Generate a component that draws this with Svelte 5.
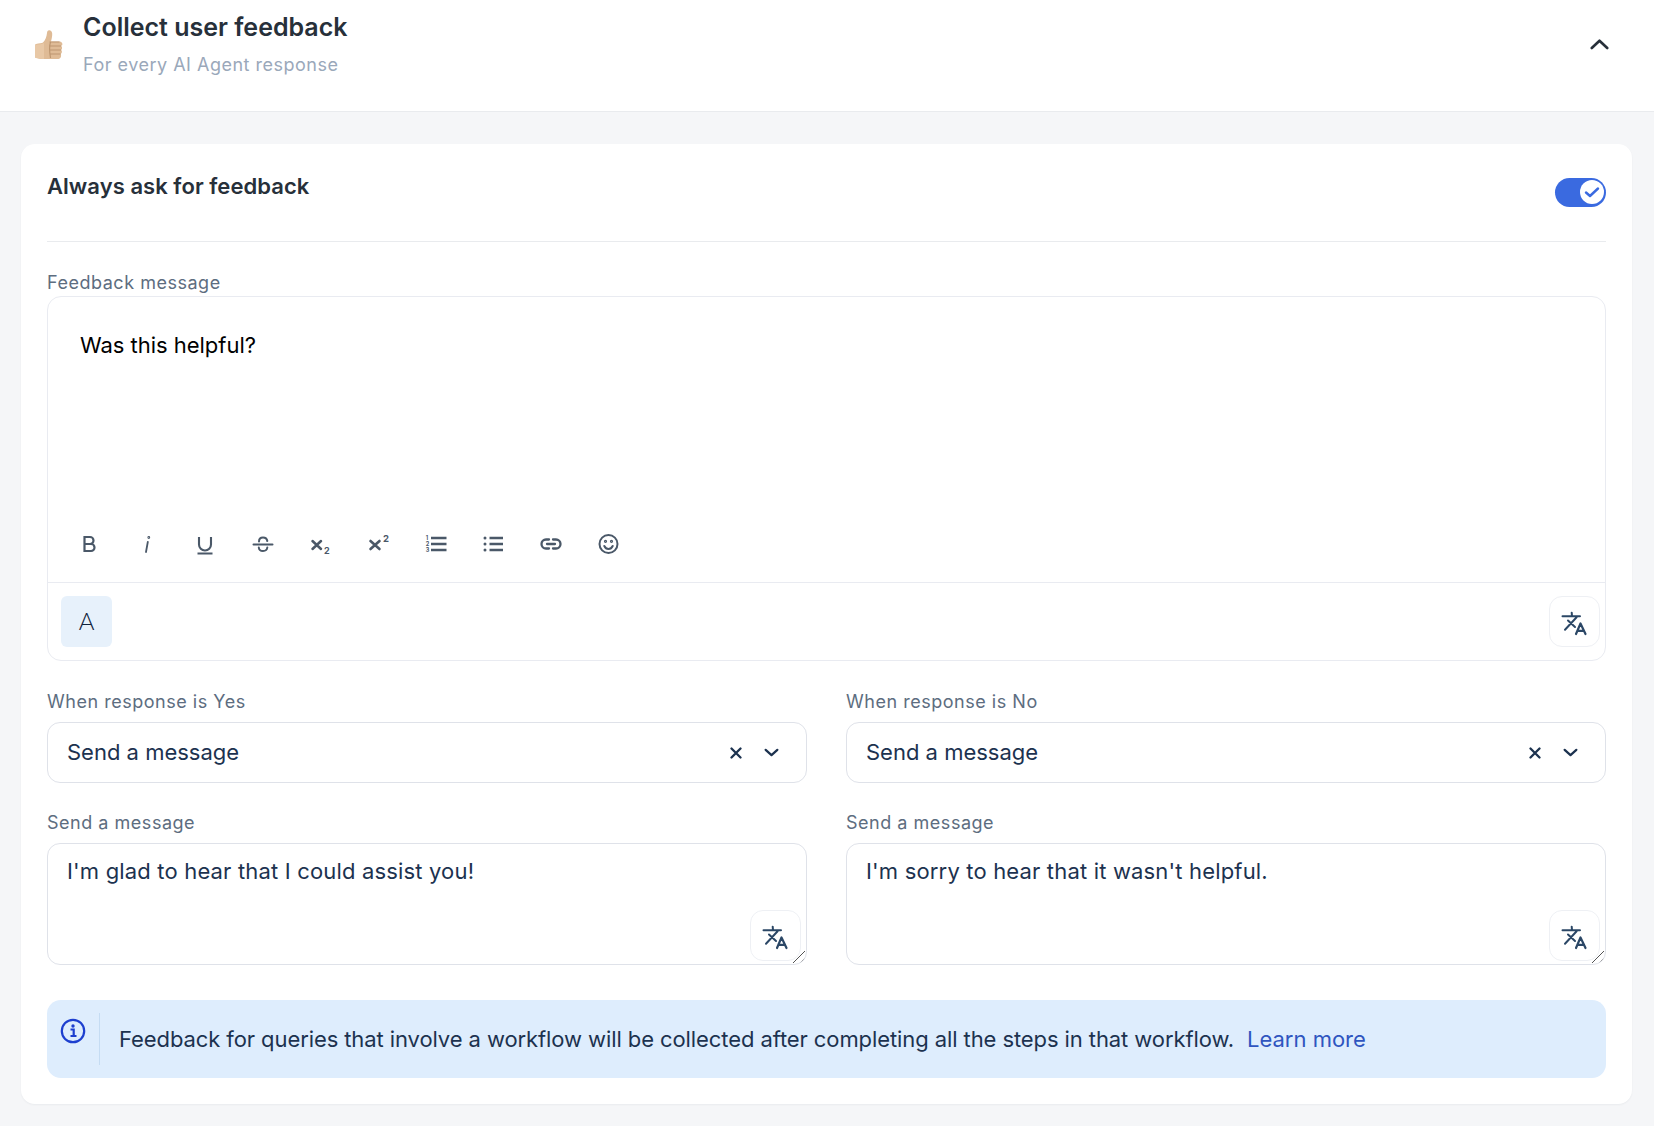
<script>
  const tools = ['b','i','u','s','sub','sup','ol','ul','link','smile'];
  const pairs = [
    { when: 'When response is Yes', msg: "I'm glad to hear that I could assist you!" },
    { when: 'When response is No', msg: "I'm sorry to hear that it wasn't helpful." }
  ];
</script>

{#snippet translate()}
  <svg class="tr-icon" viewBox="0 0 26 26" fill="none" stroke="#2b4766" stroke-width="2" stroke-linecap="round" stroke-linejoin="round">
    <path d="M1.500 6.300H19M10.700 2.700l.3 3.400M4 19.700 15.600 7.300M7 10.500l7 6.500" />
    <path stroke-width="2.200" d="M15 24l4.500-10.500L24.500 24M16.500 20.800h6.500" />
  </svg>
{/snippet}

{#snippet chevronDown()}
  <svg class="chev" viewBox="0 0 16 16" fill="none" stroke="#1c324f" stroke-width="2.100" stroke-linecap="round" stroke-linejoin="round"><path d="M2.500 5.500 8 10.500l5.500-5" /></svg>
{/snippet}

<div class="page">
  <header class="head">
    <svg class="thumb" viewBox="0 0 28 30">
      <path d="M1 14C4 13 7 13.500 8 12.500 10.500 10 11.500 7 12 3 12.200 1 13 0 14.500.2 16.500.5 17.500 2.500 17.200 5 17 7.500 16.500 9.500 16 11.500L24.500 11.500C26.500 11.500 27.400 13 27.400 14 27.400 15 26.800 15.500 26.200 16 27.400 16.800 27.400 19 26.200 20 27.300 21 27.200 23 25.800 24 26.500 25.500 26 28.800 23.500 29L9 29C6 29 3 28.500 1 28 0 27.700 0 27 0 26L0 15C0 14.500.3 14.200 1 14Z" fill="#dfbb96" />
      <path d="M0 15C4 14 7 14.500 9 13L9 29C6 29 3 28.500 1 28 0 27.700 0 27 0 26Z" fill="#e8c8a6" />
      <path d="M14.500 12h10M14 16h12M14.500 20h11.500M15 24h10.500M15.500 12c-1 3-1 10 0 16" stroke="#bd9670" stroke-width="1.200" fill="none" />
    </svg>
    <div class="head-text">
      <div class="title">Collect user feedback</div>
      <div class="sub">For every AI Agent response</div>
    </div>
    <svg class="up" viewBox="0 0 16 16" fill="none" stroke="#27303a" stroke-width="2.200" stroke-linecap="round" stroke-linejoin="round"><path d="M1.500 11 8 4.800 14.500 11" /></svg>
  </header>

  <main class="body">
    <section class="card">
      <div class="row-top">
        <h2>Always ask for feedback</h2>
        <div class="toggle">
          <span class="knob">
            <svg viewBox="0 0 16 16" fill="none" stroke="#3a6ae0" stroke-width="2.400" stroke-linecap="round" stroke-linejoin="round"><path d="M2 8.500 6 12l8-7.500" /></svg>
          </span>
        </div>
      </div>

      <div class="label lab-fb">Feedback message</div>
      <div class="editor">
        <div class="edit-area">Was this helpful?</div>
        <div class="toolbar">
          {#each tools as t}
            <span class="tool">
              {#if t === 'b'}
                <svg viewBox="0 0 22 22" fill="none" stroke="#4a5868" stroke-width="2.200"><path d="M5.500 4H11a3.500 3.500 0 0 1 0 7H5.500zM5.500 11H12a3.500 3.500 0 0 1 0 7H5.500z" /></svg>
              {:else if t === 'i'}
                <svg viewBox="0 0 22 22" fill="none" stroke="#4a5868" stroke-width="1.800" stroke-linecap="round"><path d="M11.800 9 10 19" /><circle cx="12.800" cy="4.500" r=".5" /></svg>
              {:else if t === 'u'}
                <svg viewBox="0 0 22 22" fill="none" stroke="#4a5868" stroke-width="2.100"><path d="M5 4v7.500a6 6 0 0 0 12 0V4M3.500 20.500h15" /></svg>
              {:else if t === 's'}
                <svg viewBox="0 0 22 22" fill="none" stroke="#4a5868" stroke-width="2" stroke-linecap="round"><path d="M1.500 11.500h19M7 8.500C7 6 8.700 4.500 11 4.500S15 6 15.300 8M6.800 14.500C7 17 8.800 18 11 18s4-1.100 4.300-3.500" /></svg>
              {:else if t === 'sub'}
                <svg viewBox="0 0 22 22" fill="none" stroke="#4a5868" stroke-width="2.500" stroke-linecap="round"><path d="M3.500 8l8.500 8M12 8l-8.500 8" /><text x="15" y="21" font-size="9" font-family="Inter" font-weight="700" fill="#4a5868" stroke="none">2</text></svg>
              {:else if t === 'sup'}
                <svg viewBox="0 0 22 22" fill="none" stroke="#4a5868" stroke-width="2.600" stroke-linecap="round"><path d="M3.500 8l9 8M12.500 8l-9 8" /><text x="16" y="9" font-size="9.500" font-family="Inter" font-weight="700" fill="#4a5868" stroke="none">2</text></svg>
              {:else if t === 'ol'}
                <svg viewBox="0 0 22 22" fill="none" stroke="#4a5868" stroke-width="2.500"><path d="M6 5h15.500M6 11h15.500M6 17h15.500" /><text x=".8" y="7" font-size="5.500" font-family="Inter" font-weight="700" fill="#4a5868" stroke="none">1</text><text x=".8" y="13" font-size="5.500" font-family="Inter" font-weight="700" fill="#4a5868" stroke="none">2</text><text x=".8" y="19" font-size="5.500" font-family="Inter" font-weight="700" fill="#4a5868" stroke="none">3</text></svg>
              {:else if t === 'ul'}
                <svg viewBox="0 0 22 22" fill="none" stroke="#4a5868" stroke-width="2.500"><path d="M7.500 5H21M7.500 11H21M7.500 17H21" /><circle cx="3" cy="5" r="1.500" fill="#4a5868" stroke="none" /><circle cx="3" cy="11" r="1.500" fill="#4a5868" stroke="none" /><circle cx="3" cy="17" r="1.500" fill="#4a5868" stroke="none" /></svg>
              {:else if t === 'link'}
                <svg viewBox="0 0 22 22" fill="none" stroke="#4a5868" stroke-width="2.300" stroke-linecap="round"><path d="M9 6.500H6a4.500 4.500 0 0 0 0 9h3M13 6.500h3a4.500 4.500 0 0 1 0 9h-3M7 11h8" /></svg>
              {:else}
                <svg viewBox="0 0 22 22" fill="none" stroke="#4a5868" stroke-width="2" stroke-linecap="round"><circle cx="10.500" cy="11" r="9" /><path d="M6.300 13c.9 2 2.400 3 4.200 3s3.300-1 4.200-3" /><circle cx="7.500" cy="8.300" r=".6" /><circle cx="13.500" cy="8.300" r=".6" /></svg>
              {/if}
            </span>
          {/each}
        </div>
        <div class="foot">
          <span class="font-btn"><span>A</span></span>
          <span class="tr-btn">{@render translate()}</span>
        </div>
      </div>

      <div class="cols">
        {#each pairs as p}
          <div class="col">
            <div class="label top">{p.when}</div>
            <div class="select">
              <span class="sel-val">Send a message</span>
              <svg class="x" viewBox="0 0 12 12" fill="none" stroke="#1c324f" stroke-width="2.300" stroke-linecap="round"><path d="M1.500 1.500l9 9M10.500 1.500l-9 9" /></svg>
              {@render chevronDown()}
            </div>
            <div class="label lab-msg">Send a message</div>
            <div class="area">
              <svg class="grip" viewBox="0 0 16 16" fill="none" stroke="#555" stroke-width="1"><path d="M15 3 3 15M15 10l-5 5" /></svg>
              <span>{p.msg}</span>
              <span class="tr-btn float">{@render translate()}</span>
            </div>
          </div>
        {/each}
      </div>

      <div class="banner">
        <div class="ico">
          <svg viewBox="0 0 26 26" fill="none"><circle cx="13" cy="13" r="11.200" stroke="#1d3fcf" stroke-width="2.200" /><circle cx="13" cy="8" r="1.700" fill="#1d3fcf" /><path d="M10.500 11.500h3.200v6.300M10.500 18h6" stroke="#1d3fcf" stroke-width="2.200" /></svg>
        </div>
        <p>Feedback for queries that involve a workflow will be collected after completing all the steps in that workflow.<a href="#top">Learn more</a></p>
      </div>
    </section>
  </main>
</div>

<style>
  :global(body) { margin: 0; font-family: Inter, "Noto Sans", sans-serif; background: #f5f6f8; }
  .page { width: 1654px; height: 1126px; overflow: hidden; background: #f5f6f8; }

  .head { height: 112px; box-sizing: border-box; background: #fff; border-bottom: 1px solid #e9ebee; display: flex; align-items: flex-start; }
  .thumb { width: 28px; height: 30px; margin: 30px 20px 0 35px; flex: none; }
  .head-text { flex: 1; padding-top: 11px; }
  .title { font-size: 25px; line-height: 32px; font-weight: 600; color: #27303a; }
  .sub { font-size: 18px; line-height: 26px; margin-top: 9px; color: #9aa8ba; letter-spacing: .5px; }
  .up { width: 19px; height: 19px; margin: 35px 45px 0 0; flex: none; }

  .body { padding: 32px 22px 0 21px; }
  .card { background: #fff; border-radius: 14px; height: 960px; box-sizing: border-box; padding: 0 26px; box-shadow: 0 1px 2px rgba(20,30,50,.05); }

  .row-top { height: 98px; box-sizing: border-box; border-bottom: 1px solid #e9ebee; display: flex; justify-content: space-between; }
  h2 { margin: 27px 0 0; font-size: 22px; line-height: 30px; font-weight: 600; color: #27303a; letter-spacing: .05px; }
  .toggle { width: 51px; height: 29px; margin-top: 34px; border-radius: 15px; background: #3a6ae0; position: relative; }
  .knob { position: absolute; right: 2px; top: 2px; width: 24px; height: 24px; border-radius: 50%; background: #fff; display: flex; align-items: center; justify-content: center; }
  .knob svg { width: 16px; height: 16px; }

  .label { font-size: 18px; line-height: 24px; color: #5d6d80; letter-spacing: .52px; }
  .lab-fb { margin-top: 29px; height: 25px; }

  .editor { height: 365px; box-sizing: border-box; border: 1px solid #e9ebf1; border-radius: 14px; display: flex; flex-direction: column; }
  .edit-area { height: 208px; box-sizing: border-box; padding: 33px 32px 0; font-size: 22px; line-height: 30px; color: #000; letter-spacing: -.03px; }
  .toolbar { height: 78px; box-sizing: border-box; border-bottom: 1px solid #e9ebf1; display: flex; align-items: center; padding-left: 30.500px; gap: 35.700px; }
  .tool { width: 22px; height: 22px; display: flex; }
  .tool svg { width: 22px; height: 22px; }
  .foot { flex: 1; display: flex; align-items: flex-start; justify-content: space-between; padding: 13px 5px 0 13px; }
  .font-btn { width: 51px; height: 51px; box-sizing: border-box; padding-bottom: 2px; border-radius: 6px; background: #e7f1fb; display: flex; align-items: center; justify-content: center; font-family: Lato, sans-serif; font-size: 24px; font-weight: 300; color: #10233d; }
  .tr-btn { width: 51px; height: 51px; box-sizing: border-box; border: 1px solid #eef0f4; border-radius: 13px; background: #fff; display: flex; align-items: center; justify-content: center; }
  .tr-icon { width: 26px; height: 26px; margin: 2px 2px 0 0; }

  .cols { display: grid; grid-template-columns: 760px 760px; gap: 39px; margin-top: 28px; }
  .col { display: flex; flex-direction: column; }
  .col .label { height: 33px; box-sizing: border-box; }
  .col .top { padding-top: 1px; }
  .select { height: 61px; box-sizing: border-box; border: 1px solid #dfe2e9; border-radius: 13px; display: flex; align-items: center; padding: 0 20px 1px 19px; font-size: 22px; font-weight: 430; color: #1c324f; }
  .sel-val { flex: 1; }
  .x { width: 12px; height: 12px; margin: 1px 21px 0 0; }
  .chev { width: 17px; height: 17px; margin: 1px 6px 0 0; }
  .col .lab-msg { margin-top: 27px; padding-top: 1px; }
  .area { height: 122px; box-sizing: border-box; border: 1px solid #dfe2e9; border-radius: 13px; padding: 12px 19px; font-size: 22px; font-weight: 420; line-height: 30px; letter-spacing: .17px; color: #1c324f; position: relative; overflow: hidden; }
  .float { position: absolute; right: 5px; bottom: 3px; }
  .grip { position: absolute; right: 0; bottom: 0; width: 16px; height: 16px; }

  .banner { margin-top: 35px; height: 78px; border-radius: 14px; background: #deedfd; display: flex; align-items: flex-start; }
  .ico { width: 53px; height: 52px; margin-top: 13px; border-right: 1px solid #c5dcf3; flex: none; box-sizing: border-box; padding: 5px 0 0 13px; }
  .ico svg { width: 26px; height: 26px; display: block; }
  p { margin: 0; padding: 24px 0 0 19px; font-size: 22px; line-height: 30px; letter-spacing: -.09px; color: #1c324f; }
  a { color: #2f55c0; text-decoration: none; margin-left: 13px; letter-spacing: 0; }
</style>
